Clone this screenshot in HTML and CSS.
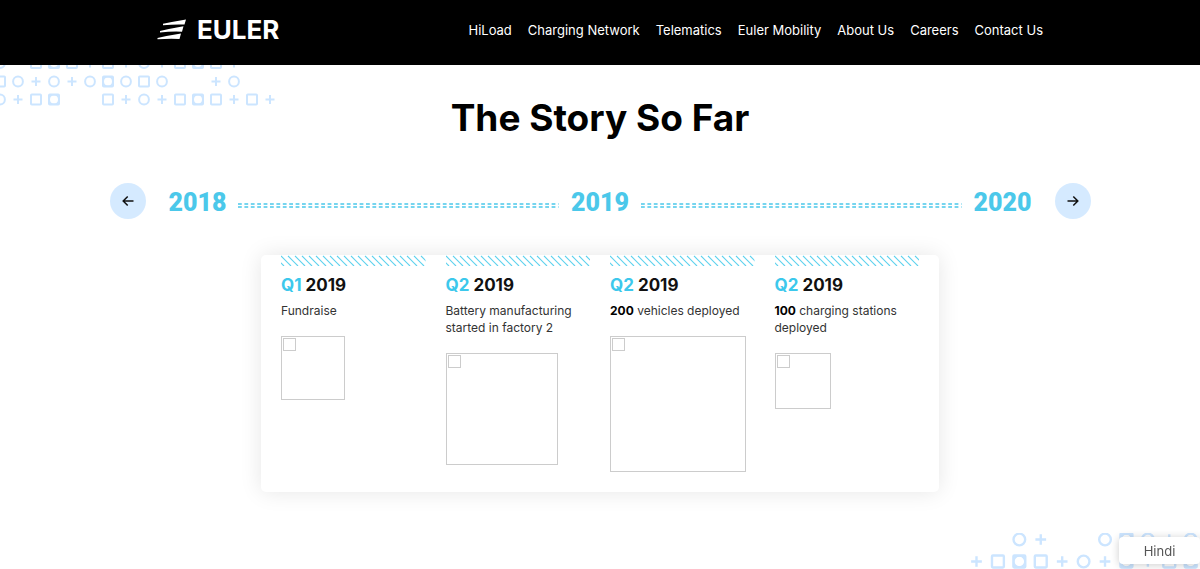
FILE: index.html
```
<!DOCTYPE html>
<html lang="en">
<head>
<meta charset="utf-8">
<meta name="viewport" content="width=device-width, initial-scale=1">
<title>Euler Motors – The Story So Far</title>
<link rel="stylesheet" href="styles.css">
</head>
<body>
<svg class="symbols" aria-hidden="true">
  <defs>
    <g id="o"><circle r="4.9"/></g>
    <g id="p"><path d="M-4.5 0h9M0-4.5v9"/></g>
    <g id="s"><rect x="-5" y="-5" width="10" height="10" rx=".8"/></g>
    <g id="c"><rect x="-5" y="-5" width="10" height="10" rx=".8"/><path class="fill" fill-rule="evenodd" d="M-5-5H5V5H-5zM-4 0a4 4 0 1 0 8 0a4 4 0 1 0-8 0z"/></g>
    <pattern id="hatch" width="7" height="11" patternUnits="userSpaceOnUse">
      <path class="hatch-line" d="M-14 1L-4 11M-7 1L3 11M0 1L10 11M7 1L17 11"/>
    </pattern>
  </defs>
</svg>

<header class="header">
  <div class="header-inner">
    <a class="logo" href="#">
      <svg class="logo-mark" viewBox="0 0 30 21" aria-hidden="true"><path d="M6 4.800Q17 2.500 29 .5L27.500 5.600Q17 5.200 6 6.300zM3 12Q14 9.500 26.500 7.300L25 12.700Q14 12.300 3 13.400zM.5 19Q11 16.500 24 14.500L22.500 20Q11 19.600 .5 20.300z"/></svg>
      <span class="logo-name">EULER</span>
    </a>
    <nav class="nav">
      <a href="#">HiLoad</a>
      <a href="#">Charging Network</a>
      <a href="#">Telematics</a>
      <a href="#">Euler Mobility</a>
      <a href="#">About Us</a>
      <a href="#">Careers</a>
      <a href="#">Contact Us</a>
    </nav>
  </div>
</header>

<main class="story">
  <svg class="art art-top" viewBox="0 0 280 42" aria-hidden="true">
    <g transform="translate(0 -2)"><use href="#o"/><use href="#s" x="36"/><use href="#c" x="54"/><use href="#s" x="72"/><use href="#p" x="90"/><use href="#s" x="108"/><use href="#p" x="126"/><use href="#o" x="144"/><use href="#p" x="162"/><use href="#s" x="180"/><use href="#c" x="198"/><use href="#s" x="216"/><use href="#p" x="234"/></g>
    <g transform="translate(0 16.500)"><use href="#s"/><use href="#o" x="18"/><use href="#p" x="36"/><use href="#o" x="54"/><use href="#p" x="72"/><use href="#o" x="90"/><use href="#c" x="108"/><use href="#o" x="126"/><use href="#s" x="144"/><use href="#o" x="162"/><use href="#p" x="216"/><use href="#o" x="234"/></g>
    <g transform="translate(0 34.500)"><use href="#o"/><use href="#p" x="18"/><use href="#s" x="36"/><use href="#c" x="54"/><use href="#s" x="108"/><use href="#p" x="126"/><use href="#o" x="144"/><use href="#p" x="162"/><use href="#s" x="180"/><use href="#c" x="198"/><use href="#s" x="216"/><use href="#p" x="234"/><use href="#s" x="252"/><use href="#p" x="270"/></g>
  </svg>

  <h1 class="title">The Story So Far</h1>

  <div class="timeline">
    <button class="arrow" type="button" aria-label="Previous year"><svg viewBox="0 0 12 12"><path d="M11.500 6H1.300M5.700 1.500L1.200 6l4.500 4.500"/></svg></button>
    <div class="years">
      <span class="year">2018</span>
      <svg class="dashes" aria-hidden="true"><line x1="0" x2="100%" y1="1" y2="1"/><line x1="0" x2="100%" y1="4" y2="4"/></svg>
      <span class="year">2019</span>
      <svg class="dashes" aria-hidden="true"><line x1="0" x2="100%" y1="1" y2="1"/><line x1="0" x2="100%" y1="4" y2="4"/></svg>
      <span class="year">2020</span>
    </div>
    <button class="arrow" type="button" aria-label="Next year"><svg viewBox="0 0 12 12"><path d="M.5 6h10.200M6.300 1.500L10.800 6l-4.500 4.500"/></svg></button>
  </div>

  <section class="card">
    <article class="event">
      <svg class="hatch" aria-hidden="true"><rect width="100%" height="100%" fill="url(#hatch)"/></svg>
      <h2><span>Q1</span> 2019</h2>
      <p>Fundraise</p>
      <div class="picture small"><i></i></div>
    </article>
    <article class="event">
      <svg class="hatch" aria-hidden="true"><rect width="100%" height="100%" fill="url(#hatch)"/></svg>
      <h2><span>Q2</span> 2019</h2>
      <p>Battery manufacturing started in factory 2</p>
      <div class="picture medium"><i></i></div>
    </article>
    <article class="event">
      <svg class="hatch" aria-hidden="true"><rect width="100%" height="100%" fill="url(#hatch)"/></svg>
      <h2><span>Q2</span> 2019</h2>
      <p><b>200</b> vehicles deployed</p>
      <div class="picture large"><i></i></div>
    </article>
    <article class="event">
      <svg class="hatch" aria-hidden="true"><rect width="100%" height="100%" fill="url(#hatch)"/></svg>
      <h2><span>Q2</span> 2019</h2>
      <p><b>100</b> charging stations deployed</p>
      <div class="picture tiny"><i></i></div>
    </article>
  </section>
</main>

<svg class="art art-bottom" viewBox="0 0 230 36" aria-hidden="true">
  <g transform="translate(6.500 6.500) scale(1.190)"><use href="#o" x="36"/><use href="#p" x="54"/><use href="#o" x="108"/><use href="#c" x="126"/><use href="#o" x="144"/><use href="#p" x="162"/><use href="#o" x="180"/></g>
  <g transform="translate(6.500 28.500) scale(1.190)"><use href="#p"/><use href="#s" x="18"/><use href="#c" x="36"/><use href="#s" x="54"/><use href="#p" x="72"/><use href="#o" x="90"/><use href="#p" x="108"/><use href="#c" x="126"/><use href="#p" x="144"/><use href="#s" x="162"/><use href="#c" x="180"/></g>
</svg>
<button class="language" type="button">Hindi</button>
</body>
</html>
```
FILE: styles.css
```
* { box-sizing: border-box; }

body {
  margin: 0;
  background: #fff;
  color: #111;
  font-family: Inter, "Liberation Sans", sans-serif;
}

h1, h2, p { margin: 0; }

.symbols {
  position: absolute;
  width: 0;
  height: 0;
}

.header {
  background: #000;
  padding: 15px 24px 21px;
}

.header-inner {
  display: flex;
  align-items: center;
  justify-content: space-between;
  max-width: 886px;
  margin: 0 auto;
}

.logo {
  display: flex;
  align-items: center;
  gap: 10px;
  color: #fff;
  text-decoration: none;
}

.logo-mark {
  width: 30px;
  height: 21px;
  fill: #fff;
}

.logo-name {
  font-size: 26px;
  font-weight: 700;
  line-height: 29px;
}

.nav {
  display: flex;
  gap: 16px;
  font-size: 13px;
  line-height: 20px;
}

.nav a {
  color: #fff;
  text-decoration: none;
}

.story {
  position: relative;
  padding: 29px 24px 77px;
}

.art {
  position: absolute;
  fill: none;
  stroke: #cce5ff;
  stroke-width: 2;
}

.art-top {
  top: 0;
  left: 0;
  width: 280px;
  height: 42px;
}

.art-bottom {
  position: fixed;
  right: 0;
  bottom: 0;
  width: 230px;
  height: 36px;
}

.fill {
  fill: #cce5ff;
  stroke: none;
}

.title {
  color: #000;
  font-size: 37px;
  font-weight: 700;
  line-height: 48px;
  text-align: center;
}

.timeline {
  display: flex;
  align-items: center;
  gap: 23px;
  max-width: 981px;
  margin: 41px auto 0;
}

.arrow {
  display: grid;
  place-items: center;
  flex: none;
  width: 36px;
  height: 36px;
  padding: 0;
  border: 0;
  border-radius: 50%;
  background: #d5eaff;
}

.arrow svg {
  width: 12px;
  height: 12px;
  fill: none;
  stroke: #111;
  stroke-width: 1.5;
}

.years {
  display: flex;
  flex: 1;
  align-items: center;
  gap: 12px;
  padding-top: 4px;
}

.year {
  color: #4bc8ea;
  font-family: Roboto, sans-serif;
  font-size: 25px;
  font-weight: 900;
  line-height: 32px;
}

.dashes {
  flex: 1;
  min-width: 0;
  height: 5px;
  margin-top: 4px;
  stroke: #4bc8ea;
  stroke-width: 1.4;
  stroke-dasharray: 3.8 2.6;
}

.card {
  display: grid;
  grid-template-columns: repeat(4, 1fr);
  gap: 20px;
  max-width: 678px;
  margin: 36px auto 0;
  padding: 0 20px 20px;
  border-radius: 5px;
  background: #fff;
  box-shadow: 0 0 22px rgba(0, 0, 0, 0.1);
}

.hatch {
  display: block;
  width: 100%;
  height: 11px;
}

.hatch-line {
  fill: none;
  stroke: #5fd2ee;
  stroke-width: 1.2;
}

.event h2 {
  margin-top: 8px;
  font-size: 17px;
  font-weight: 700;
  line-height: 22px;
}

.event h2 span { color: #3cc8ec; }

.event p {
  margin-top: 6px;
  color: #333;
  font-size: 12px;
  line-height: 17px;
}

.event b { color: #000; }

.picture {
  aspect-ratio: 1;
  margin-top: 17px;
  padding: 1px;
  border: 1px solid #ccc;
}

.picture i {
  display: block;
  width: 13px;
  height: 13px;
  border: 1px solid #ccc;
}

.tiny { width: 56px; }
.small { width: 64px; }
.medium { width: 112px; }
.large { width: 136px; }

.language {
  position: fixed;
  right: 0;
  bottom: 5px;
  width: 81px;
  height: 27px;
  padding: 0;
  border: 0;
  border-radius: 4px;
  background: #fff;
  box-shadow: 0 1px 8px rgba(0, 0, 0, 0.2);
  color: #555;
  font: 13px Inter, sans-serif;
}
```
